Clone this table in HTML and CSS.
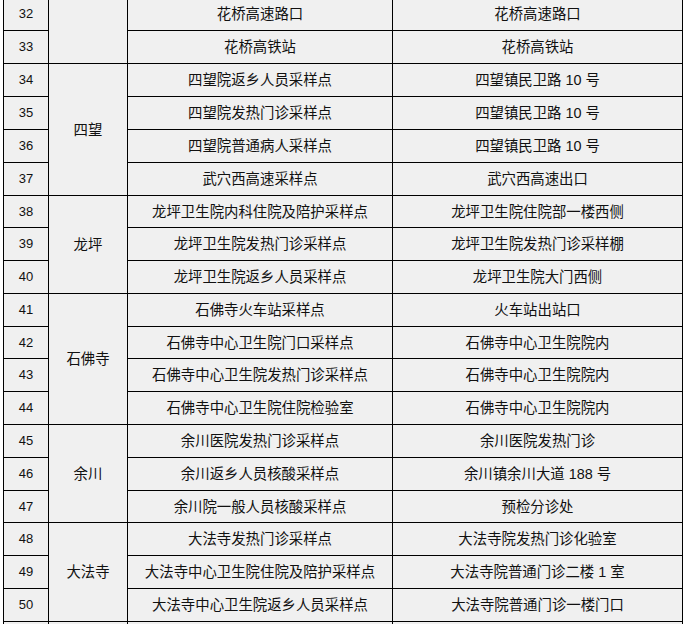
FILE: index.html
```html
<!DOCTYPE html>
<html lang="zh-CN">
<head>
<meta charset="utf-8">
<title>采样点</title>
<link rel="stylesheet" href="styles.css">
</head>
<body>
<table class="sheet">
  <colgroup>
    <col class="c-no">
    <col class="c-town">
    <col class="c-site">
    <col class="c-addr">
  </colgroup>
  <tbody>
    <tr class="r33"><td class="no">32</td><td class="town" rowspan="2"></td><td>花桥高速路口</td><td>花桥高速路口</td></tr>
    <tr class="r33"><td class="no">33</td><td>花桥高铁站</td><td>花桥高铁站</td></tr>

    <tr class="r33"><td class="no">34</td><td class="town" rowspan="4">四望</td><td>四望院返乡人员采样点</td><td>四望镇民卫路 10 号</td></tr>
    <tr class="r33"><td class="no">35</td><td>四望院发热门诊采样点</td><td>四望镇民卫路 10 号</td></tr>
    <tr class="r33"><td class="no">36</td><td>四望院普通病人采样点</td><td>四望镇民卫路 10 号</td></tr>
    <tr class="r33"><td class="no">37</td><td>武穴西高速采样点</td><td>武穴西高速出口</td></tr>

    <tr class="r32"><td class="no">38</td><td class="town" rowspan="3">龙坪</td><td>龙坪卫生院内科住院及陪护采样点</td><td>龙坪卫生院住院部一楼西侧</td></tr>
    <tr class="r33"><td class="no">39</td><td>龙坪卫生院发热门诊采样点</td><td>龙坪卫生院发热门诊采样棚</td></tr>
    <tr class="r33"><td class="no">40</td><td>龙坪卫生院返乡人员采样点</td><td>龙坪卫生院大门西侧</td></tr>

    <tr class="r33"><td class="no">41</td><td class="town" rowspan="4">石佛寺</td><td>石佛寺火车站采样点</td><td>火车站出站口</td></tr>
    <tr class="r32"><td class="no">42</td><td>石佛寺中心卫生院门口采样点</td><td>石佛寺中心卫生院院内</td></tr>
    <tr class="r33"><td class="no">43</td><td>石佛寺中心卫生院发热门诊采样点</td><td>石佛寺中心卫生院院内</td></tr>
    <tr class="r33"><td class="no">44</td><td>石佛寺中心卫生院住院检验室</td><td>石佛寺中心卫生院院内</td></tr>

    <tr class="r33"><td class="no">45</td><td class="town" rowspan="3">余川</td><td>余川医院发热门诊采样点</td><td>余川医院发热门诊</td></tr>
    <tr class="r33"><td class="no">46</td><td>余川返乡人员核酸采样点</td><td>余川镇余川大道 188 号</td></tr>
    <tr class="r32"><td class="no">47</td><td>余川院一般人员核酸采样点</td><td>预检分诊处</td></tr>

    <tr class="r33"><td class="no">48</td><td class="town" rowspan="3">大法寺</td><td>大法寺发热门诊采样点</td><td>大法寺院发热门诊化验室</td></tr>
    <tr class="r33"><td class="no">49</td><td>大法寺中心卫生院住院及陪护采样点</td><td>大法寺院普通门诊二楼 1 室</td></tr>
    <tr class="r33"><td class="no">50</td><td>大法寺中心卫生院返乡人员采样点</td><td>大法寺院普通门诊一楼门口</td></tr>

    <tr class="r33"><td class="no"></td><td class="town"></td><td></td><td></td></tr>
  </tbody>
</table>
</body>
</html>
```

FILE: styles.css
```css
html, body {
  margin: 0;
  padding: 0;
  background: #ffffff;
  overflow: hidden;
}

.sheet {
  border-collapse: collapse;
  table-layout: fixed;
  width: 679px;
  margin: -3px 0 0 3px;
  background: #f0f0f0;
  color: #111111;
  font-family: "Liberation Sans", "Noto Sans CJK SC", sans-serif;
  font-size: 14.4px;
}

.c-no { width: 45px; }
.c-town { width: 79px; }
.c-site { width: 265px; }
.c-addr { width: 290px; }

.sheet td {
  border: 1px solid #000000;
  padding: 0;
  text-align: center;
  vertical-align: middle;
  white-space: nowrap;
  line-height: 18px;
}

.r33 { height: 33px; }
.r32 { height: 32px; }

.sheet td.no {
  font-size: 13px;
}
```
